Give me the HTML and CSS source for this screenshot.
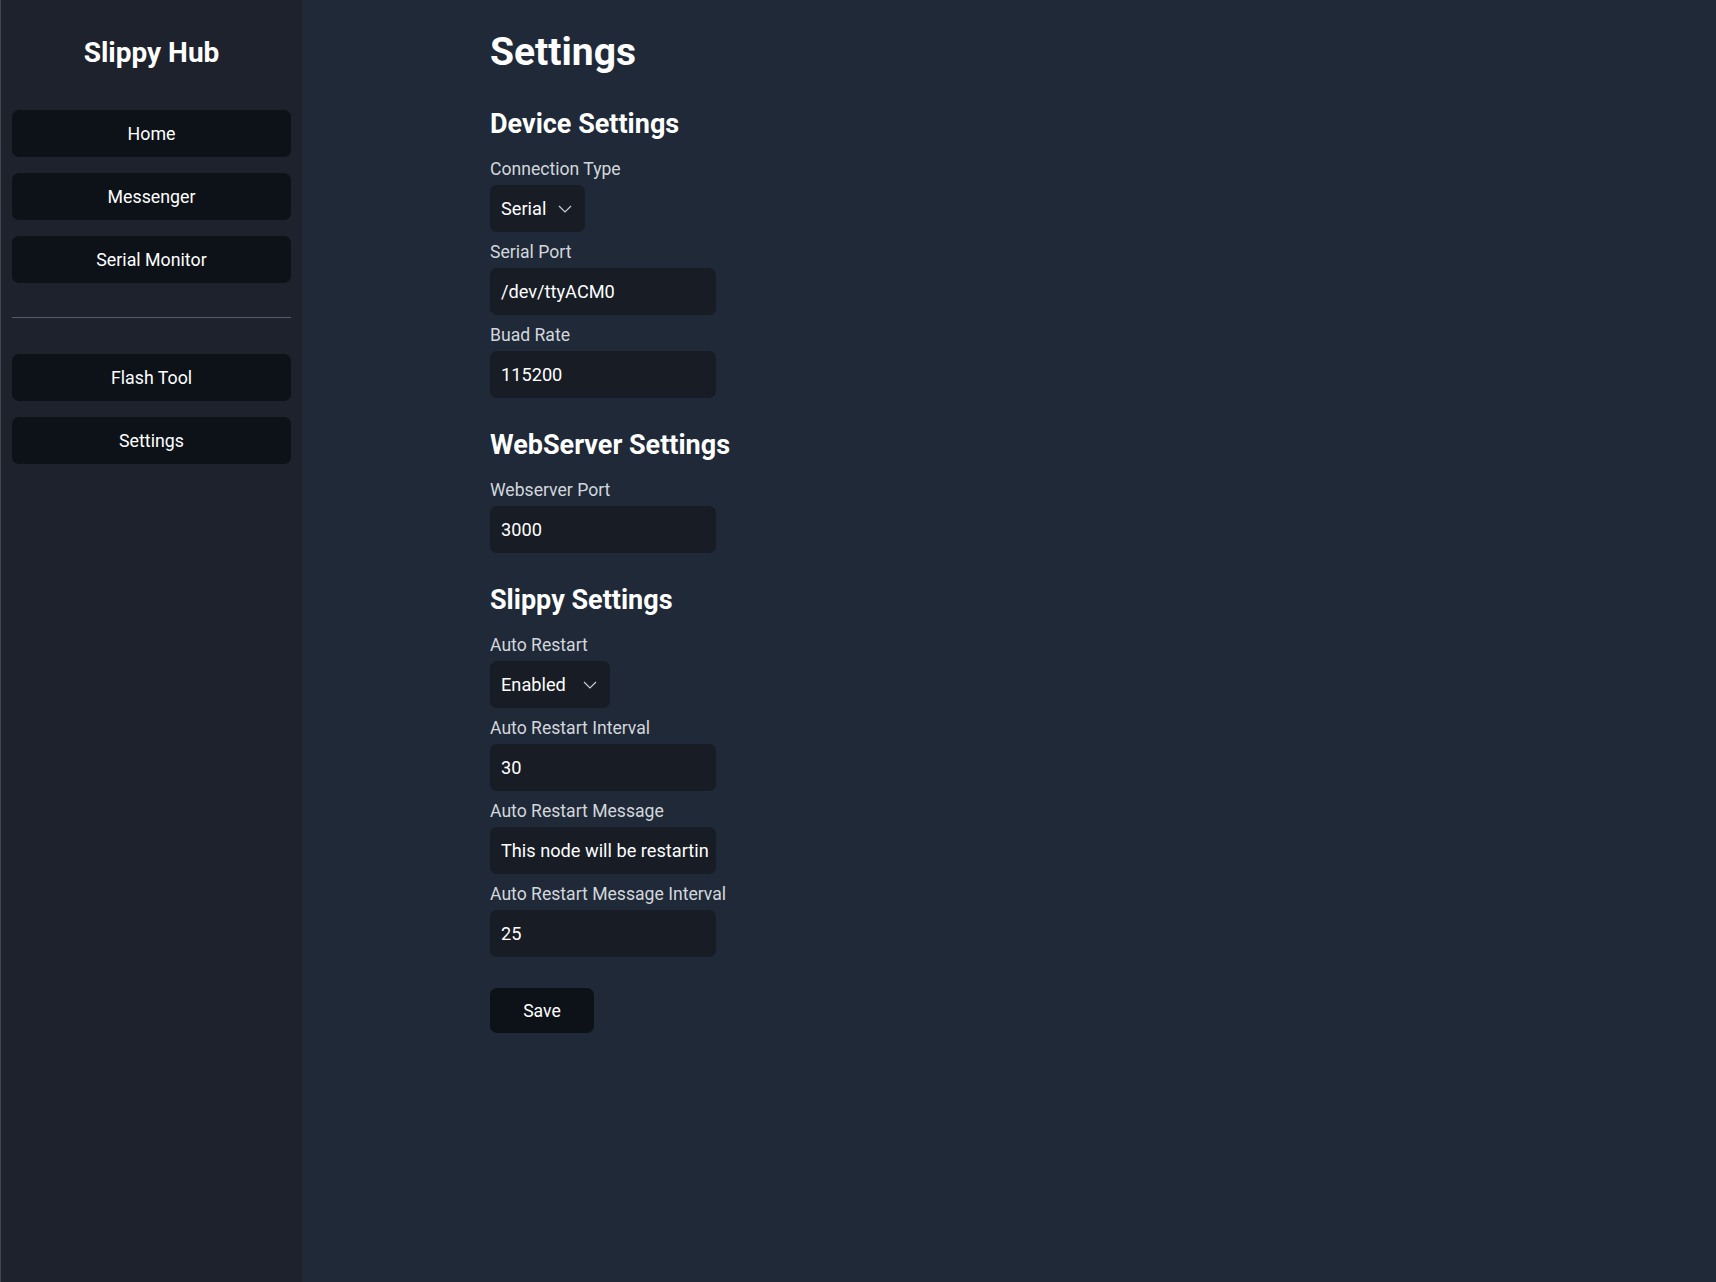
FILE: index.html
```html
<!DOCTYPE html>
<html lang="en">
<head>
<meta charset="utf-8">
<title>Slippy Hub - Settings</title>
<link rel="stylesheet" href="styles.css">
</head>
<body>
<div class="app">
  <aside class="sidebar">
    <div class="brand">Slippy Hub</div>
    <nav class="nav-group">
      <a class="nav-btn" href="#">Home</a>
      <a class="nav-btn" href="#">Messenger</a>
      <a class="nav-btn" href="#">Serial Monitor</a>
    </nav>
    <hr class="divider">
    <nav class="nav-group">
      <a class="nav-btn" href="#">Flash Tool</a>
      <a class="nav-btn" href="#">Settings</a>
    </nav>
  </aside>
  <main class="main">
    <h1 class="page-title">Settings</h1>

    <section class="section">
      <h2 class="section-title">Device Settings</h2>
      <div class="fields">
        <div class="field">
          <label class="label">Connection Type</label>
          <div class="select select-sm">
            <span class="select-value">Serial</span>
            <svg class="chev" width="14" height="8" viewBox="0 0 14 8"><path d="M1 1 L7 7 L13 1" fill="none" stroke="#c9ced6" stroke-width="1.2"/></svg>
          </div>
        </div>
        <div class="field">
          <label class="label">Serial Port</label>
          <div class="input">/dev/ttyACM0</div>
        </div>
        <div class="field">
          <label class="label">Buad Rate</label>
          <div class="input">115200</div>
        </div>
      </div>
    </section>

    <section class="section">
      <h2 class="section-title">WebServer Settings</h2>
      <div class="fields">
        <div class="field">
          <label class="label">Webserver Port</label>
          <div class="input">3000</div>
        </div>
      </div>
    </section>

    <section class="section">
      <h2 class="section-title">Slippy Settings</h2>
      <div class="fields">
        <div class="field">
          <label class="label">Auto Restart</label>
          <div class="select select-md">
            <span class="select-value">Enabled</span>
            <svg class="chev" width="14" height="8" viewBox="0 0 14 8"><path d="M1 1 L7 7 L13 1" fill="none" stroke="#c9ced6" stroke-width="1.2"/></svg>
          </div>
        </div>
        <div class="field">
          <label class="label">Auto Restart Interval</label>
          <div class="input">30</div>
        </div>
        <div class="field">
          <label class="label">Auto Restart Message</label>
          <div class="input">This node will be restartin</div>
        </div>
        <div class="field">
          <label class="label">Auto Restart Message Interval</label>
          <div class="input">25</div>
        </div>
      </div>
    </section>

    <button class="save-btn">Save</button>
  </main>
</div>
</body>
</html>
```
FILE: styles.css
```css
* { box-sizing: border-box; }
html, body { margin: 0; padding: 0; height: 100%; }
body {
  background: #1f2937;
  color: #ffffff;
  font-family: Roboto, "Liberation Sans", sans-serif;
  font-size: 17.6px;
}
.app { display: flex; min-height: 100vh; }

.sidebar {
  width: 302px;
  flex: 0 0 302px;
  background: #1d222d;
  border-left: 1px solid #41464d;
  padding: 37px 11px 0 11px;
  display: flex;
  flex-direction: column;
}
.brand {
  text-align: center;
  font-size: 28px;
  font-weight: 700;
  line-height: 32px;
  margin-bottom: 41px;
}
.nav-group { display: flex; flex-direction: column; gap: 16px; }
.nav-btn {
  display: flex;
  align-items: center;
  justify-content: center;
  height: 47px;
  background: #0d1219;
  border-radius: 7px;
  color: #ffffff;
  text-decoration: none;
  font-size: 17.8px;
}
.divider {
  border: 0;
  border-top: 1px solid #4f5f73;
  margin: 34px 0 36px 0;
  height: 0;
}

.main {
  flex: 1;
  padding: 29px 0 40px 188px;
}
.page-title {
  margin: 0 0 33px 0;
  font-size: 39px;
  line-height: 46px;
  font-weight: 700;
}
.section { margin-bottom: 31px; }
.section-title {
  margin: 0 0 17px 0;
  font-size: 27px;
  line-height: 32px;
  font-weight: 700;
}
.fields { display: flex; flex-direction: column; gap: 8px; }
.field { display: flex; flex-direction: column; gap: 4px; }
.label {
  display: block;
  line-height: 24px;
  color: #d3d7dd;
  font-size: 17.6px;
}
.input {
  width: 226px;
  height: 47px;
  background: #171c25;
  border-radius: 7px;
  padding: 0 11px;
  display: flex;
  align-items: center;
  white-space: nowrap;
  font-size: 18.2px;
  color: #ffffff;
}
.select {
  height: 47px;
  background: #171c25;
  border-radius: 7px;
  padding: 0 13px 0 11px;
  display: flex;
  align-items: center;
  justify-content: space-between;
  font-size: 18.2px;
}
.select-sm { width: 95px; }
.select-md { width: 120px; }
.chev { display: block; }

.save-btn {
  display: block;
  width: 104px;
  height: 45px;
  margin-top: 31px;
  background: #0d1219;
  border: 0;
  border-radius: 7px;
  color: #ffffff;
  font-family: inherit;
  font-size: 17.6px;
}
```
